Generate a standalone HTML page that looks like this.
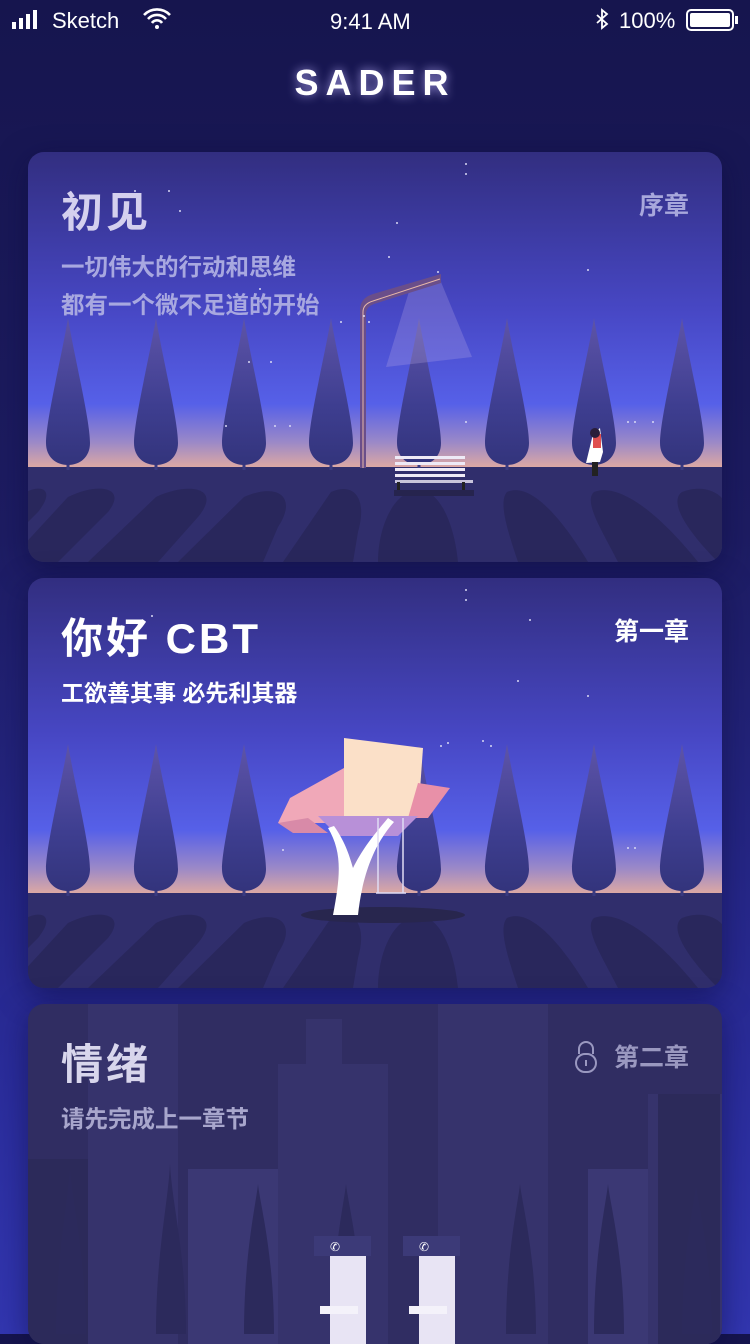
<!DOCTYPE html>
<html><head><meta charset="utf-8"><style>
*{margin:0;padding:0;box-sizing:border-box}
body{width:750px;height:1334px;overflow:hidden;background:linear-gradient(180deg,#16154e 0%,#1d1c62 40%,#2a2c9a 80%,#3236b0 100%);font-family:"Liberation Sans","Noto Sans CJK SC",sans-serif;color:#fff;position:relative}
.sb{position:absolute;top:0;left:0;width:750px;height:40px;font-size:22px}
.logo{position:absolute;top:62px;width:750px;text-align:center;font-size:36px;font-weight:bold;letter-spacing:7px;text-shadow:0 0 10px rgba(190,180,255,.8);font-family:"Liberation Sans",sans-serif}
.card{position:absolute;left:28px;width:694px;height:410px;border-radius:16px;overflow:hidden;box-shadow:0 8px 30px rgba(10,10,60,.5)}
.card svg{position:absolute;left:0;top:0}
.t{position:absolute;left:33px;font-size:42px;font-weight:bold;letter-spacing:3px;line-height:50px}
.s{position:absolute;left:33px;font-size:23.5px;font-weight:bold;line-height:38px}
.ch{position:absolute;right:33px;top:34px;font-size:25px;font-weight:bold}
</style></head><body>
<div class="sb">
<svg width="750" height="40" style="position:absolute;left:0;top:0">
<rect x="12" y="22" width="4" height="7" fill="#fff"/><rect x="19" y="18" width="4" height="11" fill="#fff"/><rect x="26" y="14" width="4" height="15" fill="#fff"/><rect x="33" y="10" width="4" height="19" fill="#fff"/>
<path d="M144 15a18 18 0 0 1 26 0M148 19a12 12 0 0 1 18 0M152 23a6 6 0 0 1 10 0" stroke="#fff" stroke-width="2.6" fill="none"/><circle cx="157" cy="27" r="2" fill="#fff"/>
<path d="M597 15l10 9-5 4V10l5 4-10 9" stroke="#fff" stroke-width="1.8" fill="none"/>
<rect x="687" y="10" width="46" height="20" rx="4" stroke="#fff" stroke-width="2" fill="none"/><rect x="690" y="13" width="40" height="14" rx="2" fill="#fff"/><rect x="735" y="16" width="3" height="8" fill="#fff"/>
</svg>
<span style="position:absolute;left:52px;top:8px">Sketch</span>
<span style="position:absolute;left:330px;top:9px">9:41 AM</span>
<span style="position:absolute;left:619px;top:8px">100%</span>
</div>
<div class="logo">SADER</div>

<svg width="0" height="0" style="position:absolute">
<defs>
<linearGradient id="sky" x1="0" y1="0" x2="0" y2="1"><stop offset="0" stop-color="#322e80"/><stop offset=".5" stop-color="#4747c4"/><stop offset=".8" stop-color="#5660e8"/><stop offset=".92" stop-color="#9a88c8"/><stop offset="1" stop-color="#dca8a4"/></linearGradient>
<linearGradient id="tg" x1="0" y1="0" x2="0" y2="1"><stop offset="0" stop-color="#5e54a8"/><stop offset=".6" stop-color="#3e3e90"/><stop offset="1" stop-color="#33347c"/></linearGradient>
<symbol id="tr" viewBox="-25 -140 50 155" overflow="visible">
<rect x="-1.5" y="0" width="3" height="15" fill="#3a3a80"/>
<path d="M0 -137C6 -100 22 -35 22 -12C22 2 12 10 0 10C-12 10 -22 2 -22 -12C-22 -35 -6 -100 0 -137Z" fill="url(#tg)"/>
</symbol>
</defs>
</svg>

<!-- card 1 -->
<div class="card" style="top:152px">
<svg width="694" height="410">
<rect width="694" height="315" fill="url(#sky)"/>
<rect y="315" width="694" height="95" fill="#302e6c"/>
<g fill="#29275c">
<path d="M-10 345C10 330 30 335 10 360L-10 380Z"/>
<path d="M40 345C70 330 100 335 80 360L30 410H-20Z"/>
<path d="M128 345C160 330 195 335 170 365L130 410H60Z"/>
<path d="M216 345C250 330 270 345 250 375L235 410H150Z"/>
<path d="M303 340C325 330 340 345 330 380L325 410H255Z"/>
<path d="M391 340C405 335 425 360 430 410H350C350 370 370 335 391 340Z"/>
<path d="M479 340C500 330 530 360 560 410H490C480 380 470 350 479 340Z"/>
<path d="M566 340C590 330 630 360 670 410H590C575 380 555 350 566 340Z"/>
<path d="M654 340C680 330 700 345 700 360V410H690C660 380 640 350 654 340Z"/>
</g>
<g>
<use href="#tr" x="15" y="163" width="50" height="155"/>
<use href="#tr" x="103" y="163" width="50" height="155"/>
<use href="#tr" x="191" y="163" width="50" height="155"/>
<use href="#tr" x="278" y="163" width="50" height="155"/>
<use href="#tr" x="366" y="163" width="50" height="155"/>
<use href="#tr" x="454" y="163" width="50" height="155"/>
<use href="#tr" x="541" y="163" width="50" height="155"/>
<use href="#tr" x="629" y="163" width="50" height="155"/>
</g>
<polygon points="383,133 413,130 444,205 358,215" fill="#c0b0e8" opacity=".25"/>
<path d="M332 316V158Q332 146 345 142L413 122V131L346 152Q338 155 338 162V316Z" fill="#6a4e8a"/>
<path d="M335 316V160Q335 152 345 149L412 127" stroke="#e8b8a8" stroke-width="1" fill="none"/>
<g fill="#eeeaf6"><rect x="367" y="304" width="70" height="3"/><rect x="367" y="310" width="70" height="3"/><rect x="367" y="316" width="70" height="3"/><rect x="367" y="322" width="70" height="3"/><rect x="367" y="328" width="78" height="3" fill="#c8c4dc"/></g>
<rect x="369" y="330" width="3" height="12" fill="#222"/><rect x="434" y="330" width="3" height="12" fill="#222"/>
<rect x="366" y="338" width="80" height="6" fill="#26244e"/>
<path d="M565 282L572 276L575 300L572 310L558 311Z" fill="#fff"/><rect x="565" y="282" width="8" height="14" fill="#e05050"/>
<circle cx="567" cy="281" r="5" fill="#2a1e3a"/><rect x="564" y="310" width="3" height="14" fill="#222"/><rect x="567" y="310" width="3" height="14" fill="#222"/>
<g fill="#d8d8f4"><circle cx="438" cy="12" r="1"/><circle cx="438" cy="22" r="1"/><circle cx="107" cy="39" r="1"/><circle cx="141" cy="39" r="1"/><circle cx="152" cy="59" r="1"/><circle cx="369" cy="71" r="1"/><circle cx="361" cy="105" r="1"/><circle cx="410" cy="120" r="1"/><circle cx="232" cy="137" r="1"/><circle cx="336" cy="164" r="1"/><circle cx="313" cy="170" r="1"/><circle cx="341" cy="170" r="1"/><circle cx="221" cy="210" r="1"/><circle cx="243" cy="210" r="1"/><circle cx="198" cy="274" r="1"/><circle cx="247" cy="274" r="1"/><circle cx="262" cy="274" r="1"/><circle cx="438" cy="270" r="1"/><circle cx="600" cy="270" r="1"/><circle cx="607" cy="270" r="1"/><circle cx="625" cy="270" r="1"/><circle cx="560" cy="118" r="1"/></g>
</svg>
<div class="t" style="top:36px;color:#d4d0ee">初见</div>
<div class="s" style="top:96px;color:#a8a8e0">一切伟大的行动和思维<br>都有一个微不足道的开始</div>
<div class="ch" style="color:#a8a8dc">序章</div>
</div>

<!-- card 2 -->
<div class="card" style="top:578px">
<svg width="694" height="410">
<rect width="694" height="315" fill="url(#sky)"/>
<rect y="315" width="694" height="95" fill="#302e6c"/>
<g fill="#29275c">
<path d="M-10 345C10 330 30 335 10 360L-10 380Z"/>
<path d="M40 345C70 330 100 335 80 360L30 410H-20Z"/>
<path d="M128 345C160 330 195 335 170 365L130 410H60Z"/>
<path d="M216 345C250 330 270 345 250 375L235 410H150Z"/>
<path d="M303 340C325 330 340 345 330 380L325 410H255Z"/>
<path d="M391 340C405 335 425 360 430 410H350C350 370 370 335 391 340Z"/>
<path d="M479 340C500 330 530 360 560 410H490C480 380 470 350 479 340Z"/>
<path d="M566 340C590 330 630 360 670 410H590C575 380 555 350 566 340Z"/>
<path d="M654 340C680 330 700 345 700 360V410H690C660 380 640 350 654 340Z"/>
</g>
<g>
<use href="#tr" x="15" y="163" width="50" height="155"/>
<use href="#tr" x="103" y="163" width="50" height="155"/>
<use href="#tr" x="191" y="163" width="50" height="155"/>
<use href="#tr" x="366" y="163" width="50" height="155"/>
<use href="#tr" x="454" y="163" width="50" height="155"/>
<use href="#tr" x="541" y="163" width="50" height="155"/>
<use href="#tr" x="629" y="163" width="50" height="155"/>
</g>
<ellipse cx="355" cy="337" rx="82" ry="8" fill="#28264e"/>
<polygon points="262,220 316,190 318,245 250,245" fill="#f0a8b8"/>
<polygon points="316,160 395,170 390,240 316,238" fill="#fbe0c8"/>
<polygon points="390,205 422,210 400,240 380,240" fill="#e890a8"/>
<polygon points="250,245 280,240 300,255 265,255" fill="#d88aa8"/>
<polygon points="290,238 390,238 370,258 310,258" fill="#b890d8"/>
<path d="M305 337C312 300 315 275 300 250L306 248C318 265 322 280 325 290C335 270 345 258 360 240L366 244C350 262 335 290 330 337Z" fill="#fff"/>
<path d="M350 240V315M375 240V315M348 315H378" stroke="#e0dcf4" stroke-width="1.5" fill="none"/>
<g fill="#d8d8f4"><circle cx="438" cy="12" r="1"/><circle cx="438" cy="22" r="1"/><circle cx="124" cy="38" r="1"/><circle cx="502" cy="42" r="1"/><circle cx="490" cy="103" r="1"/><circle cx="560" cy="118" r="1"/><circle cx="413" cy="168" r="1"/><circle cx="420" cy="165" r="1"/><circle cx="455" cy="163" r="1"/><circle cx="463" cy="168" r="1"/><circle cx="600" cy="270" r="1"/><circle cx="607" cy="270" r="1"/><circle cx="255" cy="272" r="1"/></g>
</svg>
<div class="t" style="top:36px;color:#fff">你好 CBT</div>
<div class="s" style="top:96px;color:#fff;font-size:23px">工欲善其事 必先利其器</div>
<div class="ch" style="color:#fff">第一章</div>
</div>

<!-- card 3 -->
<div class="card" style="top:1004px;height:340px;background:#302d62">
<svg width="694" height="340">
<g fill="#36336c">
<rect x="60" y="0" width="90" height="340"/><rect x="250" y="60" width="110" height="280"/><rect x="278" y="15" width="36" height="50"/><rect x="410" y="0" width="40" height="340"/><rect x="430" y="0" width="90" height="340"/><rect x="160" y="165" width="90" height="175" fill="#3b3874"/><rect x="560" y="165" width="60" height="175" fill="#3b3874"/><rect x="620" y="90" width="74" height="250"/>
<rect x="0" y="155" width="60" height="185" fill="#2c2a5a"/><rect x="630" y="90" width="62" height="250" fill="#2c2a5a"/>
</g>
<g fill="#2c2a5c">
<path d="M28 330C28 250 40 200 42 160C44 200 58 250 58 330Z"/><path d="M128 330C128 250 140 200 142 160C144 200 158 250 158 330Z"/><path d="M216 330C216 250 228 200 230 180C232 200 246 250 246 330Z"/><path d="M304 330C304 250 316 200 318 180C320 200 334 250 334 330Z"/><path d="M478 330C478 250 490 200 492 180C494 200 508 250 508 330Z"/><path d="M566 330C566 250 578 200 580 180C582 200 596 250 596 330Z"/><path d="M654 330C654 250 666 200 668 180C670 200 684 250 684 330Z"/>
</g>
<rect x="286" y="232" width="57" height="20" fill="#3c3a78"/><rect x="375" y="232" width="57" height="20" fill="#3c3a78"/>
<rect x="302" y="252" width="36" height="90" fill="#e8e4f4"/><rect x="391" y="252" width="36" height="90" fill="#e8e4f4"/>
<rect x="292" y="302" width="38" height="8" fill="#f4f2fa"/><rect x="381" y="302" width="38" height="8" fill="#f4f2fa"/>
<text x="302" y="247" font-size="12" fill="#fff" font-family="DejaVu Sans">✆</text><text x="391" y="247" font-size="12" fill="#fff" font-family="DejaVu Sans">✆</text>
</svg>
<div class="t" style="top:36px;color:#d8d6ec">情绪</div>
<div class="s" style="top:96px;color:#a8a6cc">请先完成上一章节</div>
<svg width="24" height="34" style="position:absolute;left:546px;top:36px"><path d="M5 14V9a7 7 0 0 1 14 0v5" stroke="#9a98c0" stroke-width="2" fill="none"/><rect x="2" y="14" width="20" height="18" rx="9" stroke="#9a98c0" stroke-width="2" fill="none"/><rect x="11" y="20" width="2" height="6" fill="#9a98c0"/></svg>
<div class="ch" style="color:#9a98c0">第二章</div>
</div>
</body></html>
